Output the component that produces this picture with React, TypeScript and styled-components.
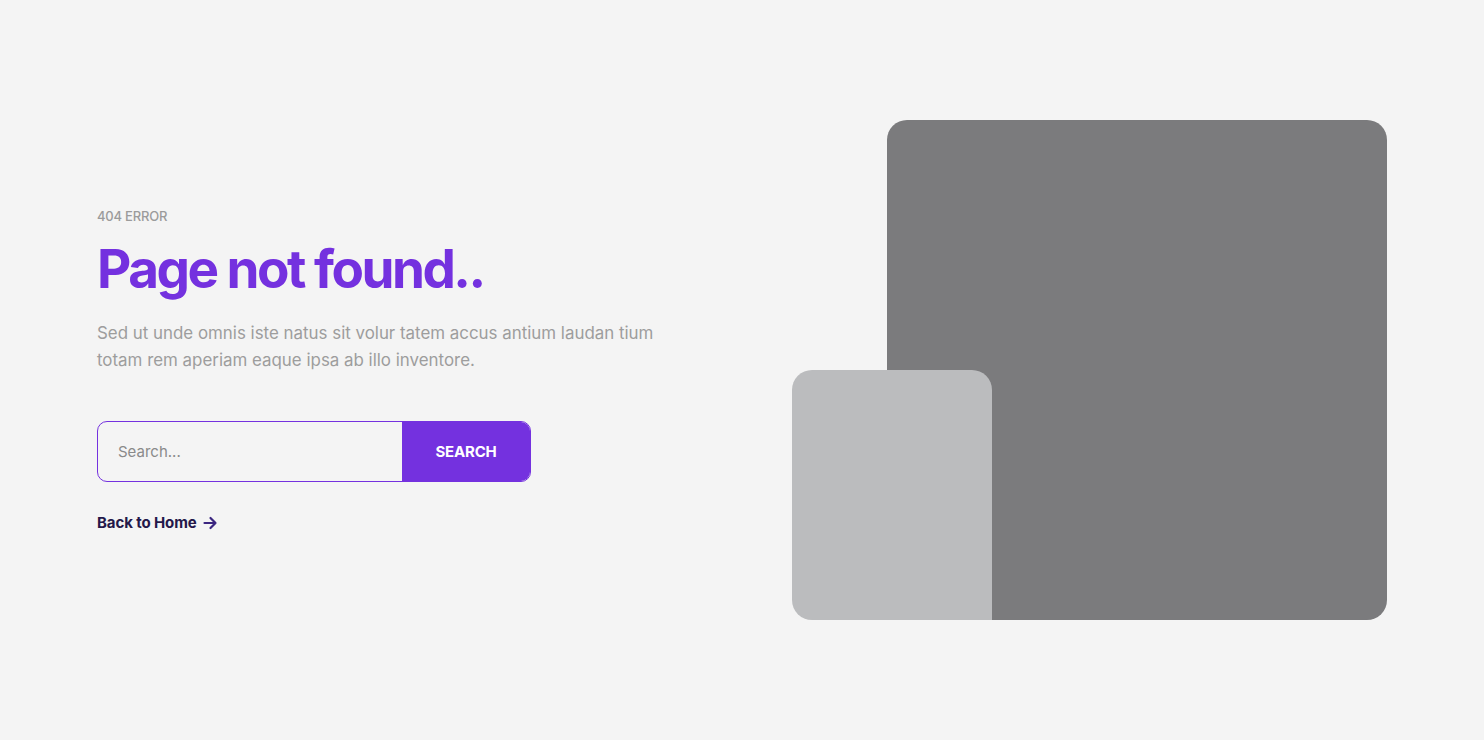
import styled, { createGlobalStyle } from 'styled-components';

const GlobalStyle = createGlobalStyle`
    * {
        box-sizing: border-box;
    }
    body {
        margin: 0;
        background-color: #f4f4f4;
        font-family: 'Inter', 'Noto Sans', sans-serif;
    }
`;

const Section = styled.section`
    display: flex;
    align-items: center;
    justify-content: center;
    height: 100vh;
    padding: 0 97px;
`;

const Container = styled.div`
    display: grid;
    grid-template-columns: 1fr 595px;
    align-items: center;
    width: 100%;
    max-width: 1290px;
`;

const Content = styled.div`
    display: flex;
    flex-direction: column;
    align-items: flex-start;
`;

const SubTitle = styled.span`
    font-size: 13px;
    font-weight: 500;
    color: #9b9b9b;
    text-transform: uppercase;
    letter-spacing: -0.2px;
`;

const Title = styled.h1`
    margin: 14px 0 19px;
    font-size: 53px;
    font-weight: 700;
    line-height: 1.2;
    letter-spacing: -2.5px;
    color: #7431df;
`;

const Text = styled.p`
    margin: 0;
    width: 580px;
    font-size: 16.9px;
    line-height: 27px;
    color: #9d9d9d;
`;

const SearchForm = styled.form`
    display: flex;
    width: 434px;
    height: 61px;
    margin-top: 47px;
    border: 1px solid #7431df;
    border-radius: 10px;
    overflow: hidden;
`;

const SearchInput = styled.input`
    flex: 1;
    min-width: 0;
    padding: 0 20px;
    border: none;
    outline: none;
    background: transparent;
    font-family: inherit;
    font-size: 15px;
    color: #333;

    &::placeholder {
        color: #8a8a8a;
    }
`;

const SearchButton = styled.button`
    width: 128px;
    border: none;
    background-color: #7431df;
    color: #fff;
    font-family: inherit;
    font-size: 15px;
    font-weight: 700;
    letter-spacing: -0.2px;
    text-transform: uppercase;
    cursor: pointer;
`;

const BackLink = styled.a`
    display: inline-flex;
    align-items: center;
    gap: 6px;
    margin-top: 31px;
    font-size: 15px;
    font-weight: 700;
    letter-spacing: -0.1px;
    color: #24184a;
    text-decoration: none;
`;

const Visual = styled.div`
    position: relative;
    height: 500px;
    padding-left: 95px;
`;

const MainShape = styled.div`
    width: 500px;
    height: 500px;
    border-radius: 20px;
    background-color: #7b7b7d;
`;

const SmallShape = styled.div`
    position: absolute;
    left: 0;
    bottom: 0;
    width: 200px;
    height: 250px;
    border-radius: 20px 20px 0 20px;
    background-color: #bbbcbe;
`;

function ArrowRight() {
    return (
        <svg width="15" height="14" viewBox="0 0 15 14" fill="none">
            <path d="M1.5 7h11M7.5 2l5 5-5 5" stroke="#3b2680" strokeWidth="2.2" strokeLinecap="round" strokeLinejoin="round" />
        </svg>
    );
}

function App() {
    return (
        <>
            <GlobalStyle />
            <Section>
                <Container>
                    <Content>
                        <SubTitle>404 Error</SubTitle>
                        <Title>Page not found..</Title>
                        <Text>Sed ut unde omnis iste natus sit volur tatem accus antium laudan tium totam rem aperiam eaque ipsa ab illo inventore.</Text>
                        <SearchForm onSubmit={(e) => e.preventDefault()}>
                            <SearchInput type="text" placeholder="Search..." />
                            <SearchButton type="submit">Search</SearchButton>
                        </SearchForm>
                        <BackLink href="#">
                            Back to Home <ArrowRight />
                        </BackLink>
                    </Content>
                    <Visual>
                        <MainShape />
                        <SmallShape />
                    </Visual>
                </Container>
            </Section>
        </>
    );
}

export default App;
